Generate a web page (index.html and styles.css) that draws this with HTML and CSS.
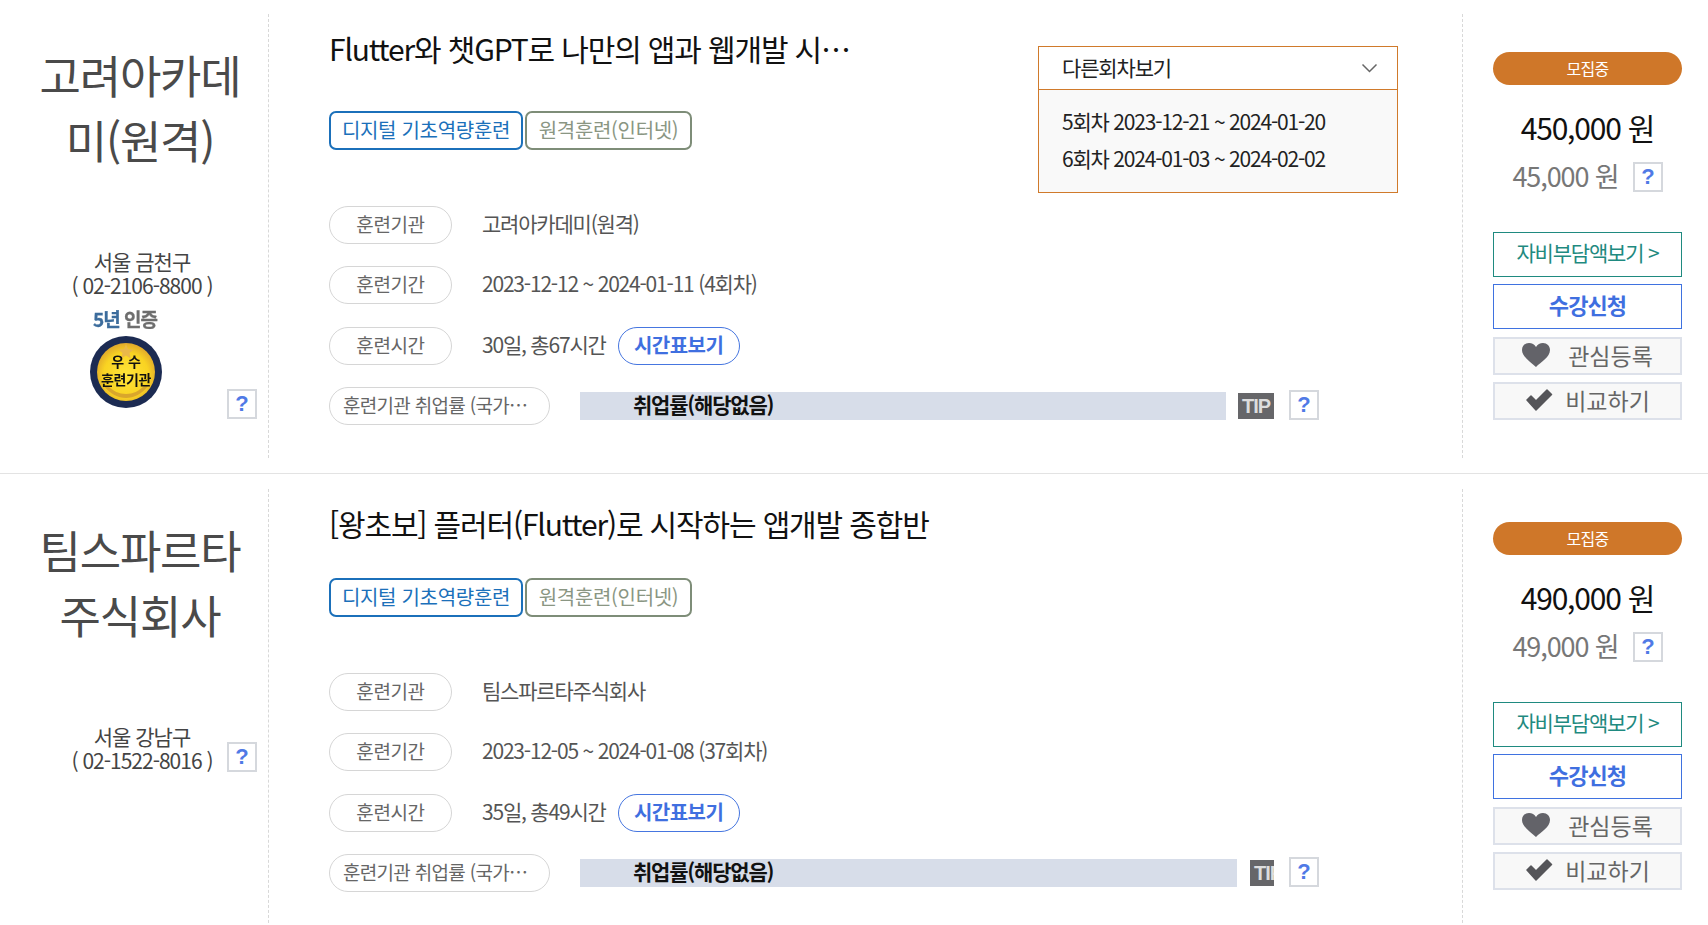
FILE: index.html
```html
<!DOCTYPE html>
<html lang="ko">
<head>
<meta charset="utf-8">
<title>훈련과정 목록</title>
<link rel="stylesheet" href="styles.css">
</head>
<body>
<section class="row">
  <div class="org">
    <h2 class="org-name">고려아카데미(원격)</h2>
    <div class="addr">
      <p class="addr-text">서울 금천구<br>( 02-2106-8800 )</p>
    </div>
    <div class="cert">
      <div class="cert-mark">
        <div class="cert-years"><span class="cert-five">5년</span> 인증</div>
        <svg class="medal" viewBox="0 0 72 72" width="72" height="72">
          <defs>
            <radialGradient id="gold" cx="50%" cy="55%" r="55%">
              <stop offset="0%" stop-color="#ffe53a"/>
              <stop offset="70%" stop-color="#f9d322"/>
              <stop offset="100%" stop-color="#dfa72c"/>
            </radialGradient>
          </defs>
          <circle cx="36" cy="36" r="36" fill="#1c2b52"/>
          <circle cx="36" cy="36" r="29" fill="url(#gold)"/>
          <path d="M36 8l2 5 5.500.5-4 3.500 1.200 5.500-4.700-3-4.700 3 1.200-5.500-4-3.500 5.500-.5z" fill="#e9b84a"/>
          <path d="M14 50c6 8 14 12 22 12s16-4 22-12l-4 0c-5 5-11 8-18 8s-13-3-18-8z" fill="#d9a62c"/>
          <text class="medal-top" x="36" y="31" text-anchor="middle">우 수</text>
          <text class="medal-bottom" x="36" y="49" text-anchor="middle">훈련기관</text>
        </svg>
      </div>
      <span class="help help-cert">?</span>
    </div>
  </div>
  <div class="main">
    <h3 class="course-title">Flutter와 챗GPT로 나만의 앱과 웹개발 시작하기 프로젝트</h3>
    <div class="tags">
      <span class="tag tag-blue">디지털 기초역량훈련</span>
      <span class="tag tag-green">원격훈련(인터넷)</span>
    </div>
    <div class="info">
      <div class="info-row"><span class="pill">훈련기관</span><span class="value">고려아카데미(원격)</span></div>
      <div class="info-row"><span class="pill">훈련기간</span><span class="value">2023-12-12 ~ 2024-01-11 (4회차)</span></div>
      <div class="info-row"><span class="pill">훈련시간</span><span class="value">30일, 총67시간</span><span class="time-btn">시간표보기</span></div>
      <div class="info-row rate-row">
        <span class="pill pill-wide">훈련기관 취업률 (국가인증 기준)</span>
        <div class="bar">취업률(해당없음)</div>
        <span class="tip">TIP</span>
        <span class="help help-rate">?</span>
      </div>
    </div>
    <div class="rounds">
      <div class="rounds-head"><span class="rounds-label">다른회차보기</span>
        <svg class="chev" viewBox="0 0 17 10" width="17" height="10"><path d="M1.500 1.500 8.500 8.500l7-7" fill="none" stroke="#666" stroke-width="1.500"/></svg>
      </div>
      <ul class="rounds-list">
        <li>5회차 2023-12-21 ~ 2024-01-20</li>
        <li>6회차 2024-01-03 ~ 2024-02-02</li>
      </ul>
    </div>
  </div>
  <aside class="side">
    <div class="status">모집중</div>
    <div class="price">450,000 원</div>
    <div class="sub-price"><span class="sub-amount">45,000 원</span><span class="help help-price">?</span></div>
    <a class="btn btn-teal">자비부담액보기 &gt;</a>
    <a class="btn btn-blue">수강신청</a>
    <a class="btn btn-gray btn-heart"><svg class="ico-heart" viewBox="0 0 28 24" width="28" height="24"><path d="M14 24C9 19 0 14 0 7c0-4 3-7 7-7 3 0 5.500 1.500 7 4 1.500-2.500 4-4 7-4 4 0 7 3 7 7 0 7-9 12-14 17z" fill="#636369"/></svg>관심등록</a>
    <a class="btn btn-gray btn-check"><svg class="ico-check" viewBox="0 0 28 22" width="28" height="22"><path d="M2 11l4-4 5 5L22 1l4.500 4.500L11 21z" fill="#555559" stroke="#555559" stroke-width="1.500" stroke-linejoin="round"/></svg>비교하기</a>
  </aside>
</section>
<section class="row row-second">
  <div class="org">
    <h2 class="org-name">팀스파르타<br>주식회사</h2>
    <div class="addr">
      <p class="addr-text">서울 강남구<br>( 02-1522-8016 )</p>
      <span class="help help-addr">?</span>
    </div>
  </div>
  <div class="main">
    <h3 class="course-title">[왕초보] 플러터(Flutter)로 시작하는 앱개발 종합반</h3>
    <div class="tags">
      <span class="tag tag-blue">디지털 기초역량훈련</span>
      <span class="tag tag-green">원격훈련(인터넷)</span>
    </div>
    <div class="info">
      <div class="info-row"><span class="pill">훈련기관</span><span class="value">팀스파르타주식회사</span></div>
      <div class="info-row"><span class="pill">훈련기간</span><span class="value">2023-12-05 ~ 2024-01-08 (37회차)</span></div>
      <div class="info-row"><span class="pill">훈련시간</span><span class="value">35일, 총49시간</span><span class="time-btn">시간표보기</span></div>
      <div class="info-row rate-row">
        <span class="pill pill-wide">훈련기관 취업률 (국가인증 기준)</span>
        <div class="bar bar-long">취업률(해당없음)</div>
        <span class="tip tip-cut">TIP</span>
        <span class="help help-rate">?</span>
      </div>
    </div>
  </div>
  <aside class="side">
    <div class="status">모집중</div>
    <div class="price">490,000 원</div>
    <div class="sub-price"><span class="sub-amount">49,000 원</span><span class="help help-price">?</span></div>
    <a class="btn btn-teal">자비부담액보기 &gt;</a>
    <a class="btn btn-blue">수강신청</a>
    <a class="btn btn-gray btn-heart"><svg class="ico-heart" viewBox="0 0 28 24" width="28" height="24"><path d="M14 24C9 19 0 14 0 7c0-4 3-7 7-7 3 0 5.500 1.500 7 4 1.500-2.500 4-4 7-4 4 0 7 3 7 7 0 7-9 12-14 17z" fill="#636369"/></svg>관심등록</a>
    <a class="btn btn-gray btn-check"><svg class="ico-check" viewBox="0 0 28 22" width="28" height="22"><path d="M2 11l4-4 5 5L22 1l4.500 4.500L11 21z" fill="#555559" stroke="#555559" stroke-width="1.500" stroke-linejoin="round"/></svg>비교하기</a>
  </aside>
</section>
</body>
</html>
```

FILE: styles.css
```css
* { box-sizing: border-box; }
html, body { margin: 0; padding: 0; height: 925px; overflow: hidden; background: #fff; }
body { font-family: "Noto Sans CJK KR", "Noto Sans", sans-serif; color: #444; }
h2, h3, p, ul { margin: 0; padding: 0; font-weight: 400; }
ul { list-style: none; }

.row { display: flex; padding: 14px 27px 15px 0; border-bottom: 1px solid #e3e3e3; height: 474px; }
.row-second { padding-top: 15px; border-bottom: 0; height: 451px; }

.org { width: 269px; flex: none; height: 444px; border-right: 1px dashed #d8d8d8; padding-top: 28px; }
.org-name { padding: 0 24px 0 36px; font-size: 45px; line-height: 65px; text-align: center; letter-spacing: -1.2px; color: #4a4a4a; }
.addr { display: grid; grid-template-columns: 62px 160px 1fr; align-items: center; margin-top: 77px; }
.addr-text { grid-column: 2; font-size: 21px; line-height: 24px; text-align: center; letter-spacing: -1px; white-space: nowrap; color: #444; }
.cert { display: flex; align-items: flex-end; margin-top: 10px; }
.cert-mark { width: 72px; margin-left: 90px; }
.cert-years { font-size: 19px; line-height: 24px; font-weight: 700; letter-spacing: -1px; color: #6e6e6e; -webkit-text-stroke: .3px currentColor; margin: 0 0 5px 3px; white-space: nowrap; filter: blur(.5px); }
.cert-five { color: #3c6c9c; }
.medal { display: block; filter: blur(.3px); }
.medal-top { font-size: 14px; font-weight: 700; fill: #111; }
.medal-bottom { font-size: 14px; font-weight: 700; fill: #111; letter-spacing: -.4px; }

.help { display: flex; align-items: center; justify-content: center; flex: none; width: 30px; height: 30px; border: 2px solid #d5d8dd; background: #fff; color: #4f7ae6; font-family: "Liberation Sans", sans-serif; font-size: 22px; font-weight: 700; line-height: 1; }
.help-cert { margin: 0 0 -11px 65px; }
.help-addr { margin: 17px 0 0 5px; }
.help-price { margin-left: 14px; }

.main { position: relative; flex: none; width: 1194px; height: 444px; padding-left: 60px; border-right: 1px dashed #d8d8d8; }
.course-title { height: 72px; font-size: 30px; line-height: 68px; letter-spacing: -1.15px; color: #111; width: 528px; white-space: nowrap; overflow: hidden; text-overflow: ellipsis; }
.row-second .course-title { width: 700px; height: 64px; }
.tags { display: flex; gap: 2px; margin-top: 25px; }
.tag { display: flex; align-items: center; justify-content: center; height: 39px; padding-bottom: 2px; border-radius: 7px; border: 2px solid; font-size: 20px; letter-spacing: -.3px; background: #fff; white-space: nowrap; }
.tag-blue { width: 194px; border-color: #1b70ba; color: #1b70ba; }
.tag-green { width: 167px; border-color: #7e8d78; color: #8a9683; }

.info { display: flex; flex-direction: column; gap: 22.3px; margin-top: 56px; }
.info-row { display: flex; align-items: center; height: 38px; }
.pill { display: block; flex: none; width: 123px; height: 38px; line-height: 33px; border: 1px solid #d6d6d6; border-radius: 19px; text-align: center; font-size: 19px; letter-spacing: -.4px; color: #666; background: #fff; }
.pill-wide { width: 221px; padding: 0 13px; letter-spacing: -.7px; white-space: nowrap; overflow: hidden; text-overflow: ellipsis; text-align: left; }
.value { margin-left: 30px; padding-bottom: 4px; font-size: 21px; letter-spacing: -1.2px; color: #555; white-space: nowrap; }
.time-btn { flex: none; width: 122px; height: 38px; margin-left: 12px; line-height: 33px; border: 1px solid #4676e0; border-radius: 19px; text-align: center; font-size: 20px; font-weight: 700; letter-spacing: -.5px; color: #3f6fe0; background: #fff; }
.bar { flex: none; width: 646px; height: 28px; margin-left: 30px; padding-left: 53px; background: #d7dde9; font-size: 21px; font-weight: 700; line-height: 25px; letter-spacing: -1.2px; color: #111; white-space: nowrap; }
.bar-long { width: 657px; }
.tip { flex: none; width: 36px; height: 26px; margin-left: 12px; overflow: hidden; background: #666669; color: #ddd; font-family: "Liberation Sans", sans-serif; font-size: 20px; font-weight: 700; line-height: 26px; padding-left: 4px; letter-spacing: -1px; white-space: nowrap; }
.tip-cut { width: 24px; margin-left: 13px; }
.help-rate { margin: -2px 0 0 15px; }

.rounds { position: absolute; top: 32px; left: 769px; width: 360px; height: 147px; border: 1px solid #d07a2b; background: #f9f9f9; }
.rounds-head { display: flex; justify-content: space-between; align-items: center; height: 43px; padding: 0 19px 0 23px; background: #fff; border-bottom: 1px solid #d07a2b; font-size: 21px; letter-spacing: -1.15px; color: #222; }
.rounds-label { padding-bottom: 3px; }
.rounds-list { padding: 13px 0 0 23px; font-size: 21px; line-height: 37px; letter-spacing: -1.2px; color: #222; white-space: nowrap; }

.side { flex: none; width: 219px; padding: 38px 0 0 30px; }
.row-second .side { padding-top: 33px; }
.status { width: 189px; height: 33px; border-radius: 17px; background: #cf7729; color: #fff; text-align: center; font-size: 16px; line-height: 32px; letter-spacing: -.8px; }
.price { width: 189px; height: 40px; margin-top: 22px; text-align: center; font-size: 30px; line-height: 40px; letter-spacing: -1.2px; color: #111; }
.sub-price { display: flex; align-items: center; justify-content: center; width: 189px; height: 30px; margin-top: 15px; font-size: 27px; letter-spacing: -1.1px; color: #777; white-space: nowrap; }
.sub-amount { padding-bottom: 3px; }
.btn { display: flex; align-items: center; justify-content: center; width: 189px; height: 45px; margin-top: 7px; padding-bottom: 2px; font-size: 21px; letter-spacing: -1.2px; background: #fff; border: 1px solid; }
.btn-teal { margin-top: 40px; padding-bottom: 6px; border-color: #1f8a80; color: #1f8a80; }
.btn-blue { padding-bottom: 5px; border-color: #3f72e0; color: #3f6fe0; font-size: 22px; letter-spacing: -.9px; font-weight: 700; }
.btn-gray { height: 38px; background: #f8f8f8; border: 2px solid #dde1ea; color: #666; font-size: 23px; letter-spacing: 0; }
.btn-heart { margin-top: 8px; }
.ico-heart { margin-right: 18px; }
.ico-check { margin-right: 12px; }
```
